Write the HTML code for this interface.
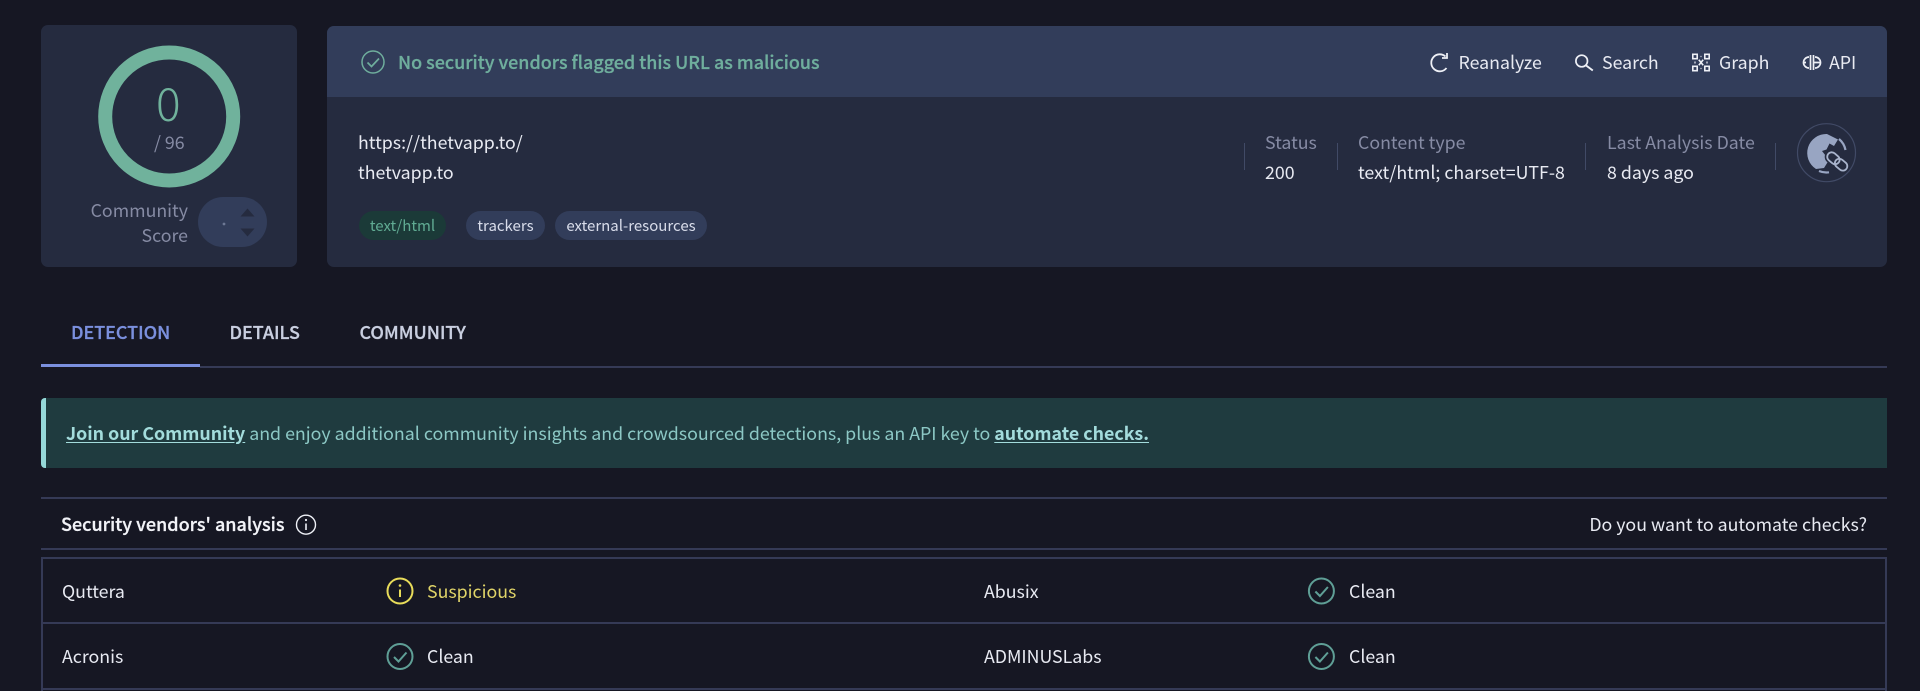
<!DOCTYPE html>
<html lang="en"><head><meta charset="utf-8"><title>VirusTotal - URL</title>
<style>
html,body{margin:0;padding:0;background:#161723;width:1920px;height:691px;overflow:hidden}
body{position:relative;font-family:"Noto Sans CJK JP","Liberation Sans",sans-serif;color:#e8eaf2;font-size:17.75px}
.t{position:absolute;white-space:nowrap;line-height:30px;height:30px}
.b{position:absolute}
.dim{color:#868ba4}
.sb{font-weight:500;-webkit-text-stroke:.25px currentColor}
.bd{font-weight:700}
.tab{font-weight:500;-webkit-text-stroke:.3px currentColor;font-size:17.9px}
u{text-underline-offset:2px}
u.bd{color:#a3dcdc}
.pill{position:absolute;top:211px;height:29px;line-height:29px;border-radius:15px;font-size:15px;background:#323d5a;color:#d8dcea;text-align:center}
svg{position:absolute;left:0;top:0}
</style></head><body>
<div class="b" style="left:41px;top:25px;width:256px;height:242px;background:#252b3f;border-radius:7px"></div>
<div class="b" style="left:327px;top:26px;width:1560px;height:241px;background:#252b3f;border-radius:7px"></div>
<div class="b" style="left:327px;top:26px;width:1560px;height:71px;background:#323d5a;border-radius:7px 7px 0 0"></div>
<div class="b" style="left:198px;top:197px;width:69px;height:50px;background:#323d5a;border-radius:25px"></div>

<div class="b" style="left:41px;top:364px;width:159px;height:3px;background:#7b90de"></div>
<div class="b" style="left:200px;top:366px;width:1687px;height:2px;background:#353a56"></div>
<div class="b" style="left:41px;top:398px;width:1846px;height:70px;background:#1f3b3f;border-radius:4px 0 0 4px"></div>
<div class="b" style="left:41px;top:398px;width:5px;height:70px;background:#95d8d8;border-radius:4px 0 0 4px"></div>
<div class="b" style="left:41px;top:497px;width:1846px;height:2px;background:#353a56"></div>
<div class="b" style="left:41px;top:548px;width:1846px;height:2px;background:#353a56"></div>
<div class="b" style="left:41px;top:557px;width:1846px;height:134px;border:2px solid #353a56;border-bottom:0;box-sizing:border-box"></div>
<div class="b" style="left:41px;top:622px;width:1846px;height:2px;background:#353a56"></div>
<div class="b" style="left:41px;top:688px;width:1846px;height:2px;background:#353a56"></div>

<div class="b" style="left:1244px;top:143px;width:1px;height:27px;background:#414a66"></div>
<div class="b" style="left:1337px;top:143px;width:1px;height:27px;background:#414a66"></div>
<div class="b" style="left:1585px;top:143px;width:1px;height:27px;background:#414a66"></div>
<div class="b" style="left:1775px;top:143px;width:1px;height:27px;background:#414a66"></div>

<svg width="1920" height="691" viewBox="0 0 1920 691" fill="none">
<circle cx="169.200" cy="116.500" r="64" stroke="#70b29c" stroke-width="14"/>
<circle cx="224" cy="224" r="1.400" fill="#6d7894"/>
<path d="M240.500 216.500L247.500 208.500L254.500 216.500Z" fill="#252b3f"/>
<path d="M240.500 228.500L247.500 236.500L254.500 228.500Z" fill="#252b3f"/>

<circle cx="373" cy="62" r="11" stroke="#6fae9d" stroke-width="1.500"/>
<path d="M367.500 62.500L371.500 66.500L379 58.500" stroke="#6fae9d" stroke-width="1.700"/>

<path d="M1445.500 56.500A8.500 8.500 0 1 0 1446.500 68" stroke="#eef0f6" stroke-width="1.800"/>
<path d="M1447 53V58H1442" stroke="#eef0f6" stroke-width="1.800"/>
<circle cx="1581.700" cy="61" r="5.800" stroke="#eef0f6" stroke-width="1.700"/>
<path d="M1585.800 65.200L1592.800 70.500" stroke="#eef0f6" stroke-width="1.900"/>

<g stroke="#eef0f6" stroke-width="1.600">
<rect x="1692.800" y="54.300" width="4.400" height="4.400"/><rect x="1704.800" y="54.300" width="4.400" height="4.400"/>
<rect x="1692.800" y="66.300" width="4.400" height="4.400"/><rect x="1704.800" y="66.300" width="4.400" height="4.400"/>
<path d="M1698.800 59.800L1703.200 65.200M1703.200 59.800L1698.800 65.200"/>
<path d="M1700.500 56.500H1701.500M1700.500 68.500H1701.500M1695 61.500V63.500M1707 61.500V63.500" stroke-width="1.200"/>
</g>
<g stroke="#eef0f6" stroke-width="1.700">
<path d="M1809 57A5.500 5.500 0 0 0 1809 68"/>
<path d="M1815 57A5.500 5.500 0 0 1 1815 68"/>
<path d="M1810.500 55V70M1813.500 55V70M1803.500 62.500H1806M1813.500 62.500H1820.500"/>
</g>

<circle cx="1826.500" cy="152.700" r="29" stroke="#414a66" stroke-width="1.200"/>
<path d="M1827 134L1838 139.500L1834 146L1829.500 143.500L1826.500 149.500L1822 151L1829 160L1824 168L1816 169A19 19 0 0 1 1827 134Z" fill="#98a5c2"/>
<path d="M1819 171A19 19 0 0 0 1829 172.300M1839 139A19 19 0 0 1 1845.500 150" stroke="#98a5c2" stroke-width="2.200"/>
<g transform="rotate(40 1837.300 161.500)">
<g stroke="#252b3f" stroke-width="5">
<rect x="1825.500" y="157" width="13.500" height="9" rx="4.500"/>
<rect x="1835.500" y="157" width="13.500" height="9" rx="4.500"/>
</g>
<g stroke="#a9b4cc" stroke-width="1.800">
<rect x="1825.500" y="157" width="13.500" height="9" rx="4.500"/>
<rect x="1835.500" y="157" width="13.500" height="9" rx="4.500"/>
</g>
</g>

<circle cx="306" cy="524.700" r="9.500" stroke="#eef0f6" stroke-width="1.400"/>
<path d="M306 523.500V530" stroke="#eef0f6" stroke-width="1.600"/>
<circle cx="306" cy="520" r="1.100" fill="#eef0f6"/>

<circle cx="400" cy="591" r="12.500" stroke="#e8dc5a" stroke-width="2"/>
<path d="M400 589.500V597" stroke="#e8dc5a" stroke-width="2"/>
<circle cx="400" cy="585.500" r="1.300" fill="#e8dc5a"/>

<g stroke="#5f9f96" stroke-width="2">
<circle cx="400" cy="656.500" r="12.500"/><path d="M394 657L398.500 661.500L406.500 652.500"/>
<circle cx="1321.400" cy="591" r="12.500"/><path d="M1315.400 591.500L1319.900 596L1327.900 587"/>
<circle cx="1321.400" cy="656.500" r="12.500"/><path d="M1315.400 657L1319.900 661.500L1327.900 652.500"/>
</g>
</svg>

<div class="t" style="left:156px;top:77px;height:50px;line-height:50px;font-size:46px;color:#70b29c;font-weight:300">0</div>
<div class="t dim" style="left:154px;top:127px">/ 96</div>
<div class="t dim" style="left:60px;width:128px;top:195px;text-align:right">Community</div>
<div class="t dim" style="left:60px;width:128px;top:220px;text-align:right">Score</div>

<div class="t sb" style="left:398px;top:47px;font-size:17.9px;color:#6fae9d">No security vendors flagged this URL as malicious</div>
<div class="t" style="left:1458.500px;top:47px">Reanalyze</div>
<div class="t" style="left:1602px;top:47px">Search</div>
<div class="t" style="left:1719px;top:47px">Graph</div>
<div class="t" style="left:1829px;top:47px">API</div>

<div class="t" style="left:358px;top:127px">https://thetvapp.to/</div>
<div class="t" style="left:358px;top:157px">thetvapp.to</div>
<div class="pill" style="left:359px;width:87px;background:#1b3a38;color:#60ab93">text/html</div>
<div class="pill" style="left:466px;width:79px">trackers</div>
<div class="pill" style="left:555px;width:152px">external-resources</div>

<div class="t dim" style="left:1265px;top:127px">Status</div>
<div class="t" style="left:1265px;top:157px">200</div>
<div class="t dim" style="left:1358px;top:127px">Content type</div>
<div class="t" style="left:1358px;top:157px;font-size:17.8px">text/html; charset=UTF-8</div>
<div class="t dim" style="left:1607px;top:127px">Last Analysis Date</div>
<div class="t" style="left:1607px;top:157px">8 days ago</div>

<div class="t tab" style="left:71px;top:317px;color:#7b90de">DETECTION</div>
<div class="t tab" style="left:229.500px;top:317px;color:#c9cfe0">DETAILS</div>
<div class="t tab" style="left:359.500px;top:317px;color:#c9cfe0">COMMUNITY</div>

<div class="t" style="left:66px;top:418px;font-size:17.8px;color:#8cc8c5"><u class="bd">Join our Community</u> and enjoy additional community insights and crowdsourced detections, plus an API key to <u class="bd">automate checks.</u></div>

<div class="t sb" style="left:61px;top:509px;font-size:18px;color:#f2f3f8">Security vendors' analysis</div>
<div class="t" style="right:53px;top:509px">Do you want to automate checks?</div>

<div class="t" style="left:62px;top:576px">Quttera</div>
<div class="t" style="left:427px;top:576px;color:#e0d468">Suspicious</div>
<div class="t" style="left:984px;top:576px">Abusix</div>
<div class="t" style="left:1349px;top:576px">Clean</div>
<div class="t" style="left:62px;top:641px">Acronis</div>
<div class="t" style="left:427px;top:641px">Clean</div>
<div class="t" style="left:984px;top:641px">ADMINUSLabs</div>
<div class="t" style="left:1349px;top:641px">Clean</div>
</body></html>
